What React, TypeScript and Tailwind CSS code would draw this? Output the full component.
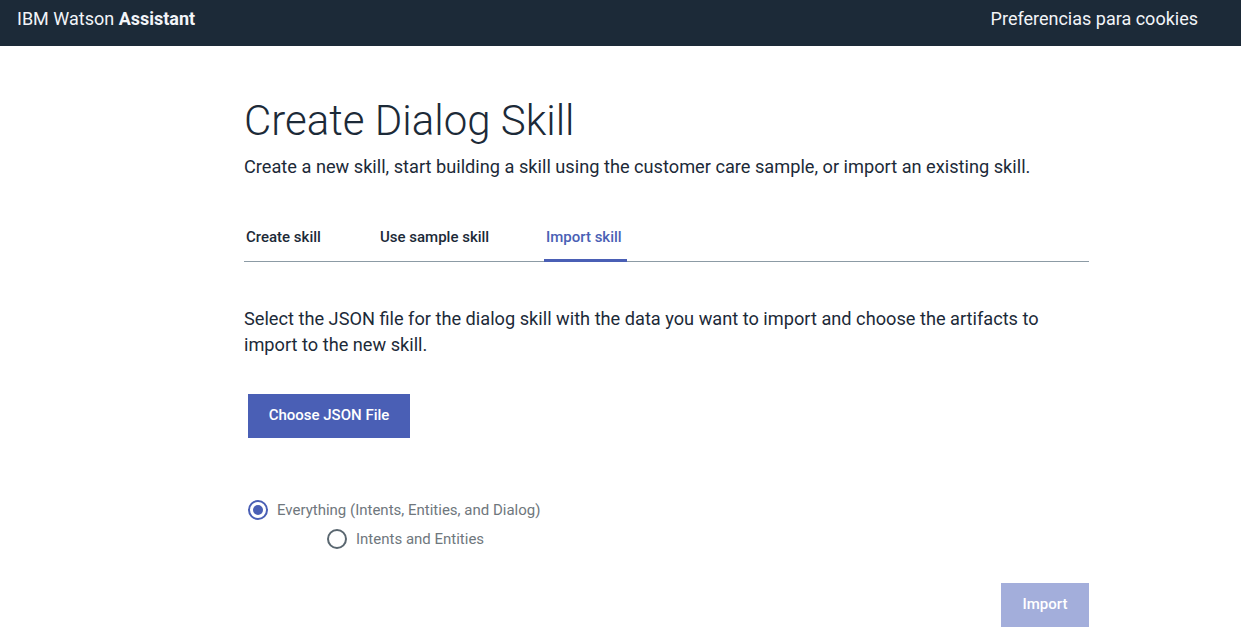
import React from "react";

const font = { fontFamily: 'Roboto, "Noto Sans", Arial, sans-serif' };

function Radio({ checked, label }: { checked?: boolean; label: string }) {
  return (
    <label className="flex items-center gap-[9px] text-[15px] text-[#6f777d]">
      <span
        className={
          "flex h-[20px] w-[20px] items-center justify-center rounded-full border-2 " +
          (checked ? "border-[#4a5fb5]" : "border-[#5a6770]")
        }
      >
        {checked && <span className="h-[10px] w-[10px] rounded-full bg-[#4a5fb5]" />}
      </span>
      {label}
    </label>
  );
}

export default function App() {
  return (
    <div className="min-h-screen bg-white" style={font}>
      <header className="flex h-[46px] items-center justify-between bg-[#1c2a38] pb-[10px] pl-[17px] pr-[43px] text-[18px] text-[#f2f4f8]">
        <div>
          IBM Watson <span className="font-bold">Assistant</span>
        </div>
        <div>Preferencias para cookies</div>
      </header>

      <main className="ml-[244px] w-[845px] pt-[50px] text-[#1c2a38]">
        <h1 className="text-[42px] font-light leading-[50px]">Create Dialog Skill</h1>
        <p className="mt-[8px] whitespace-nowrap text-[18.2px] leading-[26px]">
          Create a new skill, start building a skill using the customer care sample, or import an existing skill.
        </p>

        <nav className="mt-[42px] flex border-b border-[#8c9ba5] text-[15px] font-medium">
          <div className="w-[134px] px-[2px] pb-[12px] pt-[4px]">Create skill</div>
          <div className="w-[166px] px-[2px] pb-[12px] pt-[4px]">Use sample skill</div>
          <div className="-mb-px w-[83px] border-b-[3px] border-[#4a5fb5] px-[2px] pb-[10px] pt-[4px] text-[#4a5fb5]">
            Import skill
          </div>
        </nav>

        <p className="mt-[44px] max-w-[815px] text-[18.2px] leading-[26px]">
          Select the JSON file for the dialog skill with the data you want to import and choose the artifacts to
          import to the new skill.
        </p>

        <button className="ml-[4px] mt-[36px] h-[44px] w-[162px] bg-[#4a5fb5] text-[15px] font-medium text-white">
          Choose JSON File
        </button>

        <div className="mt-[61px] flex flex-col gap-[7px] pl-[4px]">
          <Radio checked label="Everything (Intents, Entities, and Dialog)" />
          <div className="pl-[79px]">
            <Radio label="Intents and Entities" />
          </div>
        </div>

        <div className="mt-[32px] flex justify-end">
          <button className="h-[44px] w-[88px] bg-[#a3aedb] text-[15px] font-medium text-white">Import</button>
        </div>
      </main>
    </div>
  );
}
